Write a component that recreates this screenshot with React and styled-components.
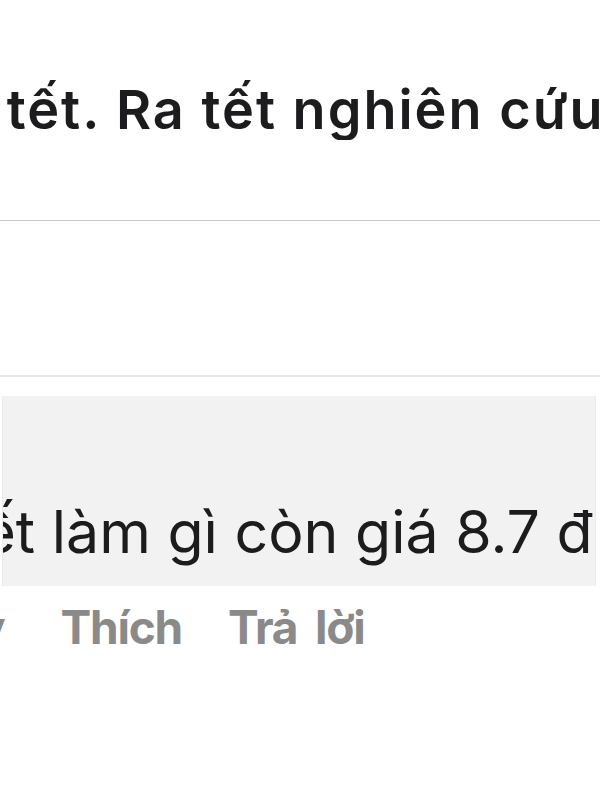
import React from "react";
import styled, { createGlobalStyle } from "styled-components";

const Global = createGlobalStyle`
  html, body { margin: 0; padding: 0; background: #ffffff; }
  body { font-family: Inter, "Noto Sans", "Liberation Sans", sans-serif; }
`;

const Page = styled.div`
  width: 600px;
  height: 800px;
  overflow: hidden;
  background: #ffffff;
  display: flex;
  flex-direction: column;
`;

const Line = styled.div`
  white-space: nowrap;
  overflow: hidden;
  font-size: ${(p) => p.$size}px;
  font-weight: ${(p) => p.$weight};
  color: ${(p) => p.$color};
  line-height: ${(p) => p.$lh}px;
  letter-spacing: ${(p) => p.$ls || 0}px;
`;

const Shift = styled.span`
  display: inline-block;
  margin-left: ${(p) => p.$x}px;
`;

const PostBody = styled.div`
  padding-top: 80px;
  height: 220px;
  box-sizing: border-box;
  flex-shrink: 0;
`;

const Divider = styled.div`
  height: ${(p) => p.$h}px;
  background: ${(p) => p.$color};
  flex-shrink: 0;
`;

const Gap = styled.div`
  height: ${(p) => p.$h}px;
  flex-shrink: 0;
`;

const Bubble = styled.div`
  height: 190px;
  flex-shrink: 0;
  background: #f2f2f2;
  box-sizing: border-box;
  padding-top: 101px;
  border-left: 1px solid #ebebeb;
  border-right: 1px solid #ebebeb;
  margin: 0 4px 0 2px;
`;

const Actions = styled.div`
  display: flex;
  align-items: baseline;
  white-space: nowrap;
  padding-top: 11px;
  font-size: 46px;
  font-weight: 700;
  letter-spacing: -1.2px;
  word-spacing: 8px;
  color: #8a8a8a;
  line-height: 60px;
`;

const Action = styled.span`
  margin-left: ${(p) => p.$gap}px;
`;

export default function App() {
  return (
    <>
      <Global />
      <Page>
        <PostBody>
          <Line $size={54} $weight={600} $color="#1c1c1e" $lh={60} $ls={2}>
            <Shift $x={-44}>n tết. Ra tết nghiên cứu xem</Shift>
          </Line>
        </PostBody>
        <Divider $h={1} $color="#c9c9c9" />
        <Gap $h={154} />
        <Divider $h={2} $color="#e8e8e8" />
        <Gap $h={19} />
        <Bubble>
          <Line $size={59} $weight={400} $color="#1c1c1e" $lh={70}>
            <Shift $x={-72}>biết làm gì còn giá 8.7 đó</Shift>
          </Line>
        </Bubble>
        <Actions>
          <Action $gap={-102}>ngày</Action>
          <Action $gap={56}>Thích</Action>
          <Action $gap={46}>Trả lời</Action>
        </Actions>
      </Page>
    </>
  );
}
